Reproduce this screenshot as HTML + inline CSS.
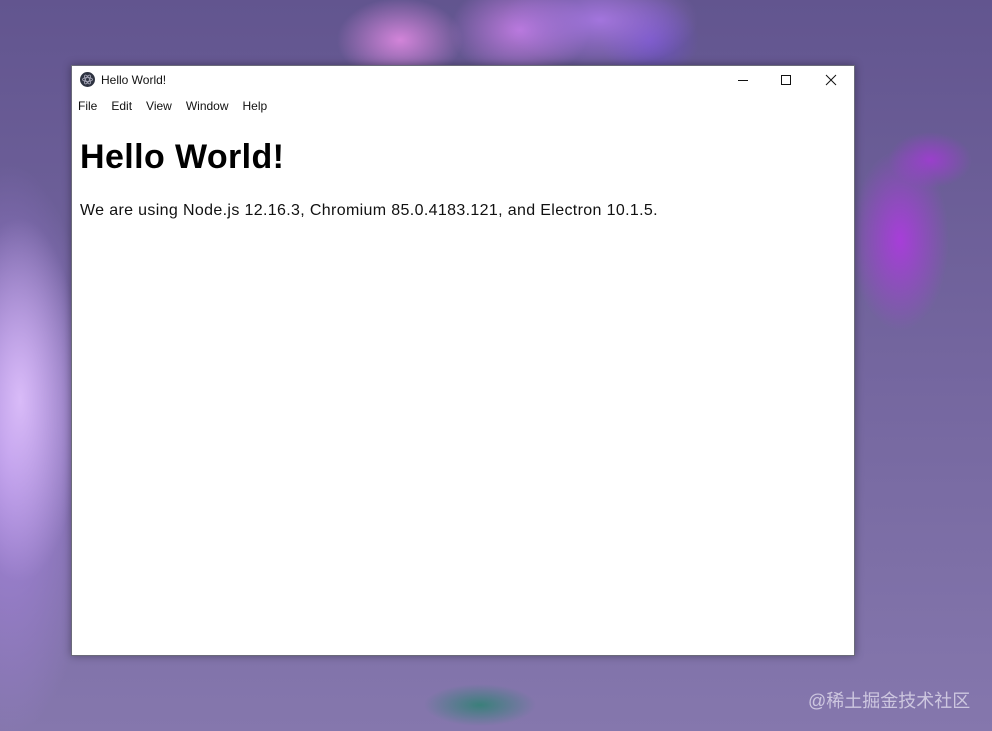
<!DOCTYPE html>
<html><head><meta charset="utf-8"><style>
html,body{margin:0;padding:0;width:992px;height:731px;overflow:hidden;font-family:"Liberation Sans","Noto Sans CJK SC",sans-serif}
body{position:relative;background:#6f619d;
background-image:
radial-gradient(ellipse 140px 70px at 600px 20px,rgba(170,120,230,.9),transparent 70%),
radial-gradient(ellipse 90px 60px at 400px 40px,rgba(230,140,230,.85),transparent 70%),
radial-gradient(ellipse 100px 70px at 520px 30px,rgba(210,130,240,.8),transparent 70%),
radial-gradient(ellipse 70px 60px at 650px 40px,rgba(110,80,200,.9),transparent 70%),
radial-gradient(ellipse 90px 260px at 20px 400px,rgba(220,190,250,.95),transparent 70%),
radial-gradient(ellipse 120px 380px at 10px 450px,rgba(180,140,240,.8),transparent 75%),
radial-gradient(ellipse 70px 130px at 900px 240px,rgba(170,60,220,.95),transparent 70%),
radial-gradient(ellipse 60px 40px at 930px 160px,rgba(160,60,210,.9),transparent 70%),
radial-gradient(ellipse 80px 30px at 480px 705px,rgba(40,130,110,.8),transparent 70%),
linear-gradient(180deg,#62558f 0%,#74669f 50%,#8577ad 100%);}
.win{position:absolute;left:71px;top:65px;width:784px;height:591px;background:#fff;box-shadow:0 0 8px rgba(0,0,0,.35);border:1px solid #6b6b7a;box-sizing:border-box}
.title{position:absolute;left:29px;top:7px;font-size:12px;color:#111}
.icon{position:absolute;left:8px;top:6px;width:15px;height:15px;border-radius:50%;background:#2f3442}
.menu{position:absolute;left:6px;top:33px;font-size:12px;color:#111}
.menu span{margin-right:14px}
h1{position:absolute;left:8px;top:72px;margin:0;font-size:34px;font-weight:bold;color:#000;letter-spacing:.4px}
p{position:absolute;left:8px;top:136px;margin:0;font-size:16px;color:#111;letter-spacing:.35px}
.wm{position:absolute;left:808px;top:687px;font-size:18px;color:rgba(230,225,240,.75)}
</style></head><body>
<div class="win">
<div class="icon"><svg width="15" height="15" viewBox="0 0 15 15"><g fill="none" stroke="#aab" stroke-width=".8"><ellipse cx="7.5" cy="7.5" rx="5" ry="2" transform="rotate(60 7.5 7.5)"/><ellipse cx="7.5" cy="7.5" rx="5" ry="2" transform="rotate(-60 7.5 7.5)"/><ellipse cx="7.5" cy="7.5" rx="5" ry="2"/></g></svg></div>
<div class="title">Hello World!</div>
<svg style="position:absolute;left:660px;top:6px" width="110" height="16"><g stroke="#111" stroke-width="1" fill="none"><path d="M6 8.5h10"/><rect x="49.5" y="3.5" width="9" height="9"/><path d="M94 3l10 10M104 3l-10 10"/></g></svg>
<div class="menu"><span>File</span><span>Edit</span><span>View</span><span>Window</span><span>Help</span></div>
<h1>Hello World!</h1>
<p>We are using Node.js 12.16.3, Chromium 85.0.4183.121, and Electron 10.1.5.</p>
</div>
<div class="wm">@稀土掘金技术社区</div>
</body></html>
